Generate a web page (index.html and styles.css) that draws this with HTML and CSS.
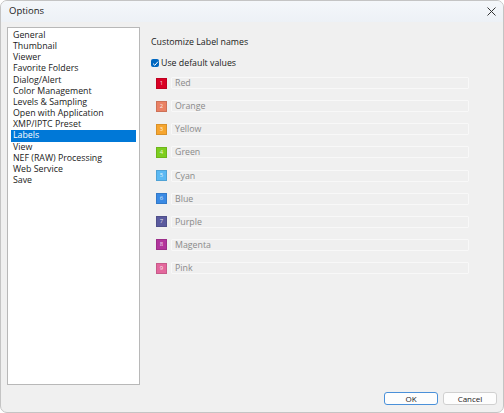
FILE: index.html
```html
<!DOCTYPE html>
<html>
<head>
<meta charset="utf-8">
<link rel="stylesheet" href="styles.css">
</head>
<body>
<div class="window">
  <div class="titlebar">
    <span class="title">Options</span>
    <svg class="close" width="9" height="9" viewBox="0 0 9 9"><path d="M0.5 0.5 L8.5 8.5 M8.5 0.5 L0.5 8.5" stroke="#333" stroke-width="1"/></svg>
  </div>
  <div class="main">
    <ul class="list">
      <li>General</li>
      <li>Thumbnail</li>
      <li>Viewer</li>
      <li>Favorite Folders</li>
      <li>Dialog/Alert</li>
      <li>Color Management</li>
      <li>Levels &amp; Sampling</li>
      <li>Open with Application</li>
      <li>XMP/IPTC Preset</li>
      <li class="selected">Labels</li>
      <li>View</li>
      <li>NEF (RAW) Processing</li>
      <li>Web Service</li>
      <li>Save</li>
    </ul>
    <div class="content">
      <div class="heading">Customize Label names</div>
      <label class="check"><span class="box"><svg width="7" height="7" viewBox="0 0 7 7"><path d="M1 3.6 L2.8 5.3 L6 1.6" fill="none" stroke="#fff" stroke-width="1"/></svg></span>Use default values</label>
      <div class="rows">
        <div class="row"><span class="sw c1">1</span><span class="field">Red</span></div>
        <div class="row"><span class="sw c2">2</span><span class="field">Orange</span></div>
        <div class="row"><span class="sw c3">3</span><span class="field">Yellow</span></div>
        <div class="row"><span class="sw c4">4</span><span class="field">Green</span></div>
        <div class="row"><span class="sw c5">5</span><span class="field">Cyan</span></div>
        <div class="row"><span class="sw c6">6</span><span class="field">Blue</span></div>
        <div class="row"><span class="sw c7">7</span><span class="field">Purple</span></div>
        <div class="row"><span class="sw c8">8</span><span class="field">Magenta</span></div>
        <div class="row"><span class="sw c9">9</span><span class="field">Pink</span></div>
      </div>
    </div>
  </div>
  <div class="footer">
    <button class="btn default">OK</button>
    <button class="btn">Cancel</button>
  </div>
</div>
</body>
</html>
```
FILE: styles.css
```css
html, body {
  margin: 0;
  padding: 0;
  background: #ffffff;
}
body {
  font-family: "Open Sans", "Noto Sans", sans-serif;
  font-size: 8.8px;
  color: #1a1a1a;
}
.window {
  box-sizing: border-box;
  width: 504px;
  height: 413px;
  border: 1px solid #c4c4c4;
  border-radius: 7px;
  background: #f0f0f0;
  display: flex;
  flex-direction: column;
  overflow: hidden;
}
.titlebar {
  height: 21px;
  flex: none;
  display: flex;
  align-items: center;
  justify-content: space-between;
  padding: 0 6px 0 8px;
  background: linear-gradient(#f4f7fa, #edf1f6);
  font-size: 9.5px;
  color: #1a1a1a;
}
.title {
  position: relative;
  top: -1px;
}
.close {
  margin-right: 1px;
}
.main {
  display: flex;
  padding: 5px 0 0 6px;
}
.list {
  box-sizing: border-box;
  width: 133px;
  height: 358px;
  margin: 0;
  padding: 2px 3px 1px;
  list-style: none;
  background: #ffffff;
  border: 1px solid #b8b8b8;
}
.list li {
  height: 11.17px;
  line-height: 11.17px;
  padding-left: 2px;
  white-space: nowrap;
}
.list li.selected {
  background: #0078d7;
  color: #ffffff;
}
.content {
  flex: 1;
  padding: 9px 0 0 11px;
}
.heading {
  height: 12px;
  line-height: 12px;
}
.check {
  display: flex;
  align-items: center;
  margin-top: 10px;
  height: 10px;
}
.box {
  box-sizing: border-box;
  width: 8px;
  height: 8px;
  border-radius: 2px;
  background: #0067c0;
  display: flex;
  align-items: center;
  justify-content: center;
  margin-right: 2px;
}
.rows {
  margin-top: 9px;
  padding-left: 5px;
}
.row {
  display: flex;
  align-items: center;
  height: 12px;
  margin-bottom: 11.15px;
}
.sw {
  box-sizing: border-box;
  width: 11px;
  height: 11px;
  border: 1px solid rgba(0,0,0,0.12);
  color: rgba(255,255,255,0.85);
  font-size: 6px;
  line-height: 9px;
  text-align: center;
  margin-right: 4px;
  flex: none;
}
.c1 { background: #d90024; }
.c2 { background: #ea8164; }
.c3 { background: #f6a52f; }
.c4 { background: #7dce1f; }
.c5 { background: #5bb9f3; }
.c6 { background: #3a8ae4; }
.c7 { background: #5a5a9e; }
.c8 { background: #b2359c; }
.c9 { background: #e3679c; }
.field {
  box-sizing: border-box;
  width: 298px;
  height: 12px;
  line-height: 10px;
  padding-left: 3px;
  border: 1px solid #f8f8f8;
  border-radius: 1px;
  background: #efefef;
  color: #8a8a8a;
}
.footer {
  margin-top: auto;
  display: flex;
  justify-content: flex-end;
  gap: 5px;
  padding: 0 6px 7px 0;
}
.btn {
  box-sizing: border-box;
  width: 54px;
  height: 13px;
  padding: 0;
  font: inherit;
  font-size: 8px;
  line-height: 11px;
  color: #1a1a1a;
  background: #fdfdfd;
  border: 1px solid #d0d0d0;
  border-radius: 3px;
}
.btn.default {
  border-color: #4a90d9;
}
```
